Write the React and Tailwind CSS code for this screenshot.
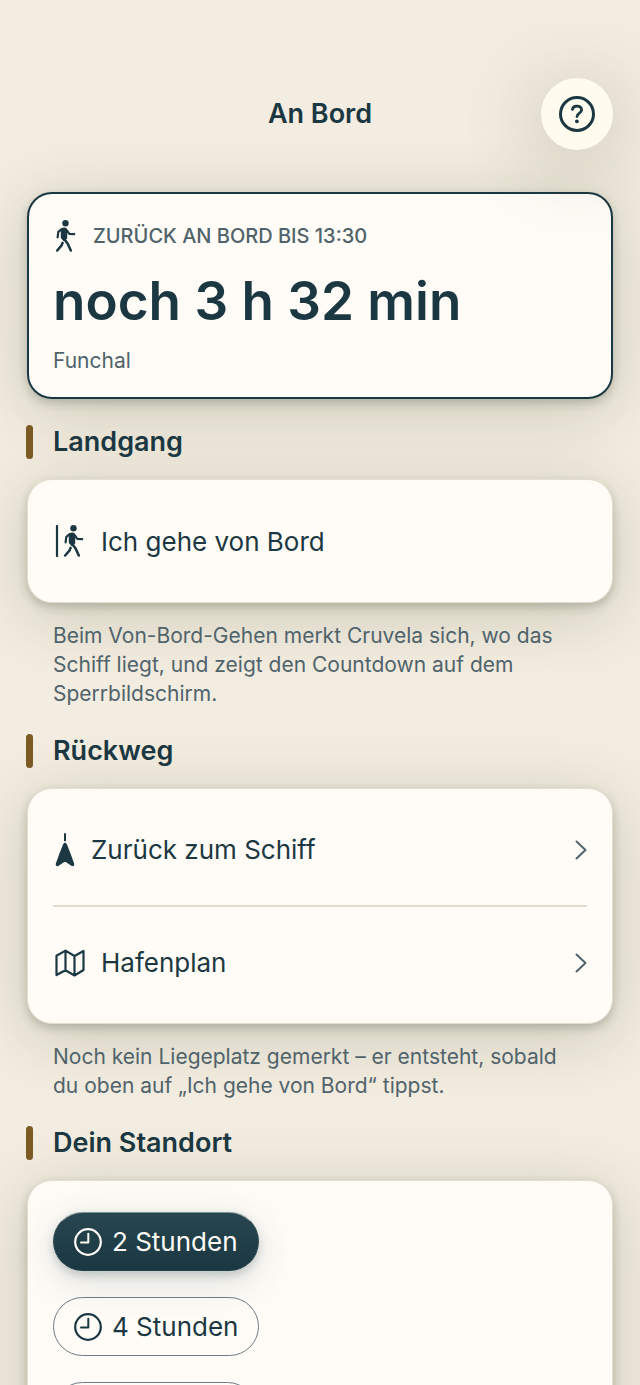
import { clsx } from "clsx";

function HelpIcon() {
  return (
    <svg width="36" height="36" viewBox="0 0 36 36" fill="none" stroke="currentColor" strokeLinecap="round" strokeLinejoin="round" aria-hidden="true">
      <circle cx="18" cy="18" r="16.5" strokeWidth="3" />
      <path d="M13.4 13.4 C13.8 11.2 15.6 10.1 18 10.1 C20.700 10.1 22.600 11.7 22.600 14 C22.600 17.2 18 17 18 20.600" strokeWidth="2.800" />
      <circle cx="17.900" cy="25.300" r="1.900" fill="currentColor" stroke="none" />
    </svg>
  );
}

// body of the walking figure, drawn in a 22x32 box
function Walker() {
  return (
    <g fill="none" stroke="currentColor" strokeLinecap="round" strokeLinejoin="round">
      <circle cx="10.500" cy="3.300" r="3.200" fill="currentColor" stroke="none" />
      <path d="M6.800 9.200 Q9.200 7.600 11.200 9.300 L11.200 18 L9 20 L6.800 17.600 Z" fill="currentColor" strokeWidth="2" />
      <path d="M6.400 9.400 L3.300 11.800 L2.600 17.400" strokeWidth="2.200" />
      <path d="M12 10.600 L14.300 13.900 L19.200 14.100" strokeWidth="2.200" />
      <path d="M8.800 18.500 L12.600 23.500 L15.800 30.500" strokeWidth="2.600" />
      <path d="M7.600 22.800 L6.600 25.400 L2.200 30.500" strokeWidth="2.500" />
    </g>
  );
}

function WalkIcon() {
  return (
    <svg width="22" height="32" viewBox="0 0 22 32" aria-hidden="true">
      <Walker />
    </svg>
  );
}

function DepartIcon() {
  return (
    <svg width="30" height="32" viewBox="0 0 30 32" aria-hidden="true">
      <path d="M2 1v30" stroke="currentColor" strokeWidth="2.200" strokeLinecap="round" />
      <g transform="translate(8 0)">
        <Walker />
      </g>
    </svg>
  );
}

function HeadingIcon() {
  return (
    <svg width="20" height="34" viewBox="0 0 20 34" aria-hidden="true">
      <path d="M10 1v6.500" stroke="currentColor" strokeWidth="2" strokeLinecap="round" />
      <path d="M8.800 11.600 Q10 9.600 11.200 11.600 Q15 21 18.500 31 Q18.700 32.800 17.200 32.400 L10 27.600 L2.800 32.400 Q1.300 32.800 1.500 31 Q5 21 8.800 11.600 Z" fill="currentColor" stroke="currentColor" strokeWidth="1.500" strokeLinejoin="round" />
    </svg>
  );
}

function MapIcon() {
  return (
    <svg width="30" height="28" viewBox="0 0 30 28" fill="none" stroke="currentColor" strokeWidth="2.200" strokeLinejoin="round" strokeLinecap="round" aria-hidden="true">
      <path d="M1.500 6.800 10.500 1.600 19.500 7 28.500 2 V21 L19.500 26.500 10.500 21.200 1.500 26 Z M10.500 1.600 V21.200 M19.500 7 V26.500" />
    </svg>
  );
}

function ClockIcon() {
  return (
    <svg width="28" height="28" viewBox="0 0 28 28" fill="none" stroke="currentColor" strokeWidth="2.200" strokeLinecap="round" strokeLinejoin="round" aria-hidden="true">
      <circle cx="14" cy="14" r="12.800" />
      <path d="M14.300 5.800v8.800H7" strokeWidth="2" />
    </svg>
  );
}

function Chevron() {
  return (
    <svg className="text-[#50636b]" width="12" height="20" viewBox="0 0 12 20" fill="none" stroke="currentColor" strokeWidth="2" strokeLinecap="round" strokeLinejoin="round" aria-hidden="true">
      <path d="M1.500 1.500 L10.500 10 L1.500 18.500" />
    </svg>
  );
}

function Card({ className, children }) {
  return (
    <div
      className={clsx(
        "mx-px rounded-[25px] bg-[#fffcf7] shadow-[0_4px_10px_rgba(40,60,50,0.24),0_12px_64px_rgba(70,90,50,0.24)]",
        className,
      )}
    >
      {children}
    </div>
  );
}

function SectionTitle({ children }) {
  return (
    <div className="flex h-[34px] items-center gap-5">
      <span className="h-[34px] w-[7px] rounded-full bg-[#7c5a24]" />
      <h2 className="text-[27px] font-semibold">{children}</h2>
    </div>
  );
}

function Note({ children }) {
  return <p className="mt-[18px] pr-12 pl-[27px] text-[21px] leading-[29px] text-[#50636b]">{children}</p>;
}

function LinkRow({ icon, label }) {
  return (
    <a href="#" className="flex h-[111px] items-center justify-between">
      <span className="flex items-center gap-4 pl-0.5 text-[26px]">
        {icon}
        {label}
      </span>
      <Chevron />
    </a>
  );
}

function DurationPill({ label, active }) {
  return (
    <button
      type="button"
      aria-pressed={active}
      className={clsx(
        "flex h-[59px] items-center gap-[10px] rounded-full border px-5 text-[26px]",
        active
          ? "border-[#24434c] border-t-[#7f9297] bg-linear-to-b from-[#27464f] to-[#1b3842] text-[#fffcf7] shadow-[0_4px_8px_rgba(27,56,66,0.2),0_10px_40px_rgba(27,56,66,0.16)]"
          : "border-[#6d7c83]",
      )}
    >
      <ClockIcon />
      {label}
    </button>
  );
}

const durations = ["2 Stunden", "4 Stunden"];

export default function App() {
  return (
    <div className="h-screen overflow-hidden bg-[#f3ece0] font-['Inter',sans-serif] text-[#1b3842]">
      <header className="grid grid-cols-[72px_1fr_72px] items-center px-[27px] pt-[78px]">
        <span />
        <h1 className="text-center text-[27px] font-semibold">An Bord</h1>
        <button
          type="button"
          aria-label="Hilfe"
          className="flex size-[72px] items-center justify-center rounded-full bg-[#fffbee] shadow-[0_12px_80px_rgba(70,80,50,0.32)]"
        >
          <HelpIcon />
        </button>
      </header>

      <main className="px-[26px] pt-[42px]">
        <Card className="border-2 border-[#1b3842] px-6 pt-[26px] pb-[22px]">
          <div className="flex items-center gap-4 pl-0.5">
            <WalkIcon />
            <p className="text-[20px] leading-[32px] font-medium text-[#50636b]">ZURÜCK AN BORD BIS 13:30</p>
          </div>
          <p className="mt-4 text-[53px] leading-[66px] font-semibold">noch 3 h 32 min</p>
          <p className="mt-3 text-[21px] leading-[29px] text-[#50636b]">Funchal</p>
        </Card>

        <section className="mt-[26px]">
          <SectionTitle>Landgang</SectionTitle>
          <Card className="mt-5 border border-[#e6ddce] px-[25px]">
            <button type="button" className="flex h-[122px] w-full items-center gap-4 pl-0.5 text-[26px]">
              <DepartIcon />
              Ich gehe von Bord
            </button>
          </Card>
          <Note>
            Beim Von-Bord-Gehen merkt Cruvela sich, wo das Schiff liegt, und zeigt den Countdown auf dem Sperrbildschirm.
          </Note>
        </section>

        <section className="mt-[26px]">
          <SectionTitle>Rückweg</SectionTitle>
          <Card className="mt-5 border border-[#e6ddce] px-[25px] py-[5px]">
            <LinkRow icon={<HeadingIcon />} label="Zurück zum Schiff" />
            <hr className="border-t-2 border-[#e3dcd0]" />
            <LinkRow icon={<MapIcon />} label="Hafenplan" />
          </Card>
          <Note>Noch kein Liegeplatz gemerkt – er entsteht, sobald du oben auf „Ich gehe von Bord“ tippst.</Note>
        </section>

        <section className="mt-[26px]">
          <SectionTitle>Dein Standort</SectionTitle>
          <Card className="mt-5 flex flex-col items-start gap-[26px] border border-[#e6ddce] px-[25px] py-[31px]">
            {durations.map((d, i) => (
              <DurationPill key={d} label={d} active={i === 0} />
            ))}
            <div className="h-[59px] w-[204px] rounded-full border border-[#6d7c83]" />
          </Card>
        </section>
      </main>
    </div>
  );
}
